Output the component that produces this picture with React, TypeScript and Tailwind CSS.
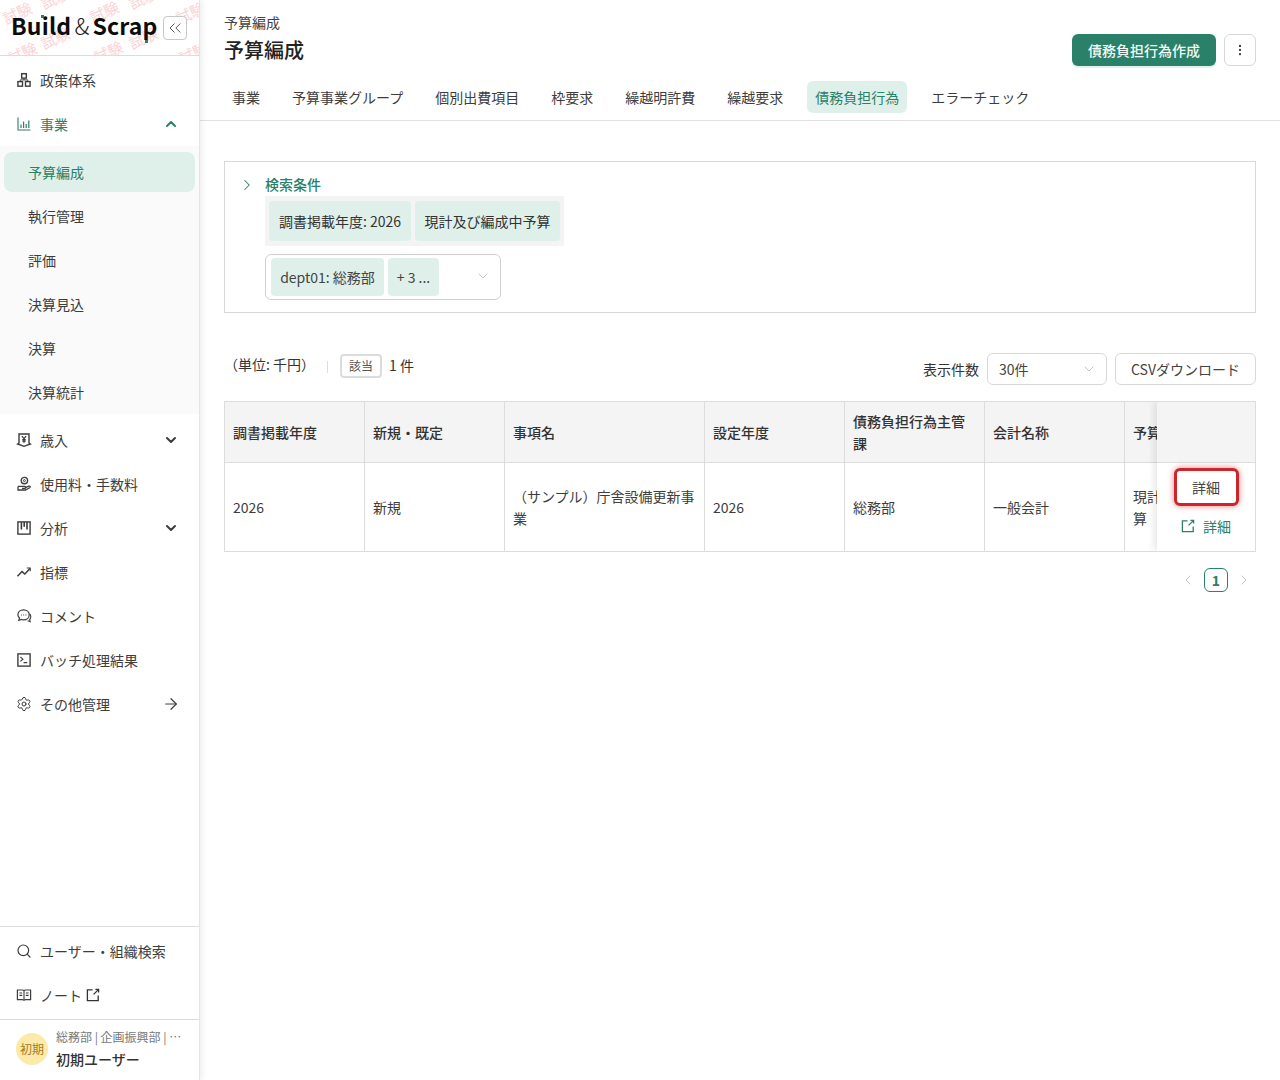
import React from "react";
import { ChevronUp, ChevronDown, ChevronRight, ChevronLeft, ChevronsLeft, ArrowRight, Search, Settings, MoreVertical } from "lucide-react";

const Ic = ({ children, className = "" }: { children: React.ReactNode; className?: string }) => (
  <svg viewBox="0 0 16 16" width="16" height="16" fill="none" stroke="currentColor" strokeWidth="1.4" className={className}>{children}</svg>
);

const OrgIcon = () => (
  <Ic><rect x="5.7" y="1.7" width="4.6" height="4.4" /><rect x="1.9" y="9.6" width="4.6" height="4.6" /><rect x="9.5" y="9.6" width="4.6" height="4.6" /><path d="M8 6.2v1.6M4.2 9.5V7.9h7.6v1.6" strokeWidth="1" /></Ic>
);
const ChartIcon = () => (
  <Ic><path d="M2 1.5V14h12.5" strokeWidth="1.1" /><path d="M5 12V8.5M7.6 12V5.5M10.2 12V8M12.8 12V4.5" strokeWidth="1.2" /></Ic>
);
const YenIcon = () => (
  <Ic><path d="M3 2h10v9.2l1.3.8L8 14.3 1.7 12l1.3-.8z" /><path d="M6 4.2 8 6.8l2-2.6M8 6.8v4M6.3 7.6h3.4M6.3 9.2h3.4" strokeWidth="1.3" /></Ic>
);
const FeeIcon = () => (
  <Ic><circle cx="8.4" cy="4.6" r="3.2" /><circle cx="8.4" cy="4.6" r="1" strokeWidth="1" /><path d="M2 10.4h6.4c1.8 0 1.8 2 0 2H6" strokeWidth="1.3" /><path d="M9.6 11.4l3.4-1.3c1.2-.3 1.7 1 .7 1.6L9.4 14H2v-3.6" strokeWidth="1.3" /></Ic>
);
const KanbanIcon = () => (
  <Ic><rect x="1.9" y="1.9" width="12.2" height="12.2" /><path d="M5.4 2v7.4M8.2 2v4.8M11 2v7.4" strokeWidth="1.6" /></Ic>
);
const TrendIcon = () => (
  <Ic><path d="M1.5 12.2 6 7.6l2.8 2.4L14 4.4" strokeWidth="1.5" /><path d="M10.8 4h3.4v3.2" strokeWidth="1.1" /></Ic>
);
const CommentIcon = () => (
  <Ic><path d="M7.6 1.9c3.2 0 5.6 2.1 5.6 5s-2.4 5-5.6 5c-.7 0-1.5-.1-2.1-.4l-2.7.8.7-2.3c-1-.9-1.6-2.1-1.6-3.1 0-3 2.5-5 5.7-5z" strokeWidth="1.2" /><path d="M13.4 5.8c1 .8 1.4 1.9 1.4 3 0 1-.4 2-1.1 2.7l.5 2.1-2.5-.8" strokeWidth="1.1" /><path d="M5 7h.9M7.2 7h.9M9.4 7h.9" strokeWidth="1.2" /></Ic>
);
const TerminalIcon = () => (
  <Ic><rect x="1.9" y="1.9" width="12.2" height="12.2" /><path d="m4.4 5 2.5 2.2-2.5 2.2M7.6 10.6h3.6" strokeWidth="1.1" /></Ic>
);
const BookIcon = () => (
  <Ic><path d="M1.4 3h5c.8 0 1.6.4 1.6 1 0-.6.8-1 1.6-1h5v9.6H9.8c-.8 0-1.8.3-1.8 1 0-.7-1-1-1.8-1H1.4z" strokeWidth="1.2" /><path d="M8 4v9.5M3.4 6h2.8M3.4 8.4h2.8M9.8 6h2.8M9.8 8.4h2.8" strokeWidth="1.1" /></Ic>
);
const ExtIcon = ({ size = 14 }: { size?: number }) => (
  <svg viewBox="0 0 14 14" width={size} height={size} fill="none" stroke="currentColor" strokeWidth="1.3">
    <path d="M6.5 1.8H1.4v10.8h10.8V7.6" /><path d="M7.6 6.4 12.4 1.6M9.4 1.4h3.2v3.2" />
  </svg>
);

const Item = ({ icon, label, right, active }: { icon: React.ReactNode; label: React.ReactNode; right?: React.ReactNode; active?: boolean }) => (
  <div className={`h-11 flex items-center pl-4 pr-5 text-sm ${active ? "text-[#2a8068]" : "text-[#3d3d3d]"}`}>
    <span className="w-6 flex items-center shrink-0">{icon}</span>
    <span className="flex-1 flex items-center pb-px">{label}</span>
    {right}
  </div>
);

const Sub = ({ label, active }: { label: string; active?: boolean }) => (
  <div className={`h-10 mb-1 mx-1 rounded-lg flex items-center pl-6 pb-px text-sm ${active ? "bg-[#dff0eb] text-[#2a8068]" : "text-[#3d3d3d]"}`}>{label}</div>
);

const marks: [number, number][] = [
  [40, -10], [128, -10], [2, 5], [89, 4], [175, 5],
  [40, 30], [128, 30], [7, 45], [93, 44], [178, 45],
];

const tabs = ["事業", "予算事業グループ", "個別出費項目", "枠要求", "繰越明許費", "繰越要求", "債務負担行為", "エラーチェック"];

const Th = ({ children, w }: { children?: React.ReactNode; w: string }) => (
  <th className={`${w} border-r border-[#dcdcdc] px-2 text-left align-middle font-medium text-sm leading-[22px] text-[#333]`}>{children}</th>
);
const Td = ({ children }: { children?: React.ReactNode }) => (
  <td className="border-r border-[#dcdcdc] px-2 text-sm leading-[22px] text-[#3d3d3d] align-middle">{children}</td>
);

export default function App() {
  return (
    <div className="flex w-[1280px] h-[1080px] overflow-hidden bg-white font-['Noto_Sans_CJK_JP','Noto_Sans',sans-serif] text-[#333]">
      <aside className="w-[200px] shrink-0 h-full flex flex-col border-r border-[#e4e4e4] shadow-[2px_0_6px_rgba(0,0,0,0.07)] z-10 bg-white">
        <div className="relative h-[56px] shrink-0 border-b border-[#dcdcdc] overflow-hidden flex items-center pl-3 pr-3">
          {marks.map(([x, y], i) => (
            <span key={i} className="absolute text-[15px] leading-none text-[#fad3d6] -rotate-[25deg] whitespace-nowrap" style={{ left: x, top: y }}>試験</span>
          ))}
          <div className="relative flex-1 min-w-0 flex items-center text-[23px] leading-none font-bold text-[#0c0c0c] tracking-[0.2px] -mt-1 -ml-[1px] whitespace-nowrap">
            Build<span className="font-light mx-[3px] text-[#222]">&amp;</span>Scrap
            <span className="absolute left-[30px] top-[1px] w-[3px] h-[3px] bg-[#2a8068]" />
            <span className="absolute left-[134px] top-[26px] w-[3px] h-[3px] bg-[#2a8068]" />
          </div>
          <button className="relative shrink-0 w-6 h-6 border border-[#c8c8c8] rounded flex items-center justify-center bg-white/80 text-[#444]">
            <ChevronsLeft size={20} strokeWidth={1.1} />
          </button>
        </div>
        <nav className="flex-1 pt-[2px]">
          <Item icon={<OrgIcon />} label="政策体系" />
          <Item active icon={<ChartIcon />} label="事業" right={<ChevronUp size={16} strokeWidth={3} />} />
          <div className="bg-[#fafafa] h-[268px] pt-[6px]">
            <Sub active label="予算編成" />
            <Sub label="執行管理" />
            <Sub label="評価" />
            <Sub label="決算見込" />
            <Sub label="決算" />
            <Sub label="決算統計" />
          </div>
          <div className="h-1" />
          <Item icon={<YenIcon />} label="歳入" right={<ChevronDown size={16} strokeWidth={3} />} />
          <Item icon={<FeeIcon />} label="使用料・手数料" />
          <Item icon={<KanbanIcon />} label="分析" right={<ChevronDown size={16} strokeWidth={3} />} />
          <Item icon={<TrendIcon />} label="指標" />
          <Item icon={<CommentIcon />} label="コメント" />
          <Item icon={<TerminalIcon />} label="バッチ処理結果" />
          <Item icon={<Settings size={16} strokeWidth={1.5} />} label="その他管理" right={<ArrowRight size={18} strokeWidth={1.6} className="-mr-px" />} />
        </nav>
        <div className="border-t border-[#dcdcdc] h-[93px] shrink-0 pt-[2px]">
          <Item icon={<Search size={16} strokeWidth={1.8} />} label="ユーザー・組織検索" />
          <Item icon={<BookIcon />} label={<>ノート<span className="ml-1 text-[#333]"><ExtIcon /></span></>} />
        </div>
        <div className="border-t border-[#dcdcdc] h-[61px] shrink-0 flex items-center pl-4 gap-2 pb-[2px]">
          <div className="w-8 h-8 rounded-full bg-[#fbeaa9] text-[#a57a26] text-xs flex items-center justify-center shrink-0">初期</div>
          <div className="min-w-0">
            <div className="text-xs leading-5 text-[#777] whitespace-nowrap">総務部 | 企画振興部 | ⋯</div>
            <div className="text-sm leading-6 font-medium text-[#333]">初期ユーザー</div>
          </div>
        </div>
      </aside>

      <main className="flex-1 min-w-0 flex flex-col">
        <header className="h-[121px] shrink-0 border-b border-[#e2e2e2] px-6 relative">
          <div className="pt-[12px] text-sm leading-5 text-[#444]">予算編成</div>
          <div className="flex items-start justify-between">
            <h1 className="mt-[4px] text-xl leading-7 font-medium text-[#222]">予算編成</h1>
            <div className="flex items-center gap-2 mt-[2px]">
              <button className="h-8 w-[144px] rounded-md bg-[#2a8068] text-[#f2faf7] text-sm font-medium shadow-[0_2px_0_#e0f2ec]">債務負担行為作成</button>
              <button className="w-8 h-8 rounded-md border border-[#d8d8d8] flex items-center justify-center text-[#444]"><MoreVertical size={14} /></button>
            </div>
          </div>
          <div className="absolute left-6 top-[81px] flex gap-4 text-sm">
            {tabs.map((t) => (
              <div key={t} className={`h-8 px-2 pb-px rounded-md flex items-center ${t === "債務負担行為" ? "bg-[#dff0eb] text-[#2a8068]" : "text-[#3d3d3d]"}`}>{t}</div>
            ))}
          </div>
        </header>

        <div className="px-6 pt-10">
          <section className="h-[152px] border border-[#d8d8d8] pl-[40px] pt-[12px] relative">
            <div className="flex items-center h-5 text-sm font-medium text-[#2a8068]">
              <ChevronRight size={18} strokeWidth={1.4} className="absolute left-[13px] top-[14px]" />
              検索条件
            </div>
            <div className="mt-[2px] w-[299px] h-[50px] bg-[#f4f4f4] flex items-center gap-1 px-1 text-sm text-[#333]">
              <span className="h-10 w-[142px] rounded bg-[#dff0eb] flex items-center justify-center whitespace-nowrap">調書掲載年度: 2026</span>
              <span className="h-10 w-[145px] rounded bg-[#dff0eb] flex items-center justify-center whitespace-nowrap">現計及び編成中予算</span>
            </div>
            <div className="mt-2 w-[236px] h-[46px] rounded-md border border-[#d0d0d0] flex items-center gap-1 px-[5px] text-sm text-[#444] relative">
              <span className="h-[38px] w-[113px] rounded bg-[#dff0eb] flex items-center justify-center whitespace-nowrap">dept01: 総務部</span>
              <span className="h-[38px] w-[51px] rounded bg-[#dff0eb] flex items-center justify-center">+ 3 ...</span>
              <ChevronDown size={16} strokeWidth={1} className="absolute right-[9px] top-[13px] text-[#aaa]" />
            </div>
          </section>

          <div className="mt-10 h-8 flex items-center text-sm text-[#333]">
            <span className="-mt-[10px] whitespace-nowrap">（単位: 千円）</span>
            <span className="-mt-1 ml-[12px] w-px h-3 bg-[#ddd]" />
            <span className="-mt-[6px] ml-3 w-[42px] h-[24px] rounded border-2 border-[#dcdcdc] text-xs flex items-center justify-center text-[#555]">該当</span>
            <span className="-mt-[9px] ml-[7px]">1 件</span>
            <span className="flex-1" />
            <span className="mr-2">表示件数</span>
            <div className="w-[120px] h-8 rounded-md border border-[#d8d8d8] flex items-center justify-between pl-[11px] pr-[9px] text-[#444]">
              30件<ChevronDown size={16} strokeWidth={1} className="text-[#aaa]" />
            </div>
            <button className="ml-2 w-[141px] h-8 rounded-md border border-[#d8d8d8] text-[#444]">CSVダウンロード</button>
          </div>

          <div className="mt-4 relative h-[151px] border border-[#dcdcdc] overflow-hidden">
            <table className="table-fixed border-separate border-spacing-0 w-[1040px] max-w-none">
              <thead>
                <tr className="h-[60px] bg-[#f4f4f4]">
                  <Th w="w-[140px]">調書掲載年度</Th>
                  <Th w="w-[140px]">新規・既定</Th>
                  <Th w="w-[200px]">事項名</Th>
                  <Th w="w-[140px]">設定年度</Th>
                  <Th w="w-[140px]">債務負担行為主管課</Th>
                  <Th w="w-[140px]">会計名称</Th>
                  <Th w="w-[140px]">予算区分</Th>
                </tr>
              </thead>
              <tbody>
                <tr className="h-[90px]">
                  <Td>2026</Td>
                  <Td>新規</Td>
                  <Td>（サンプル）庁舎設備更新事業</Td>
                  <Td>2026</Td>
                  <Td>総務部</Td>
                  <Td>一般会計</Td>
                  <Td>現計及び編成中予算</Td>
                </tr>
              </tbody>
            </table>
            <div className="absolute left-0 right-0 top-[60px] h-px bg-[#dcdcdc]" />
            <div className="absolute right-0 top-0 bottom-0 w-[98px] bg-white shadow-[-4px_0_6px_rgba(0,0,0,0.08)] flex flex-col">
              <div className="h-[60px] bg-[#f4f4f4] shrink-0" />
              <div className="h-px bg-[#dcdcdc] shrink-0" />
              <div className="flex-1 flex flex-col items-center pt-[5px]">
                <button className="w-[65px] h-[38px] rounded-md border-[3px] border-[#cc252b] bg-white text-sm text-[#444] shadow-[0_0_6px_rgba(208,43,48,0.6)]">詳細</button>
                <div className="mt-[10px] flex items-center gap-2 text-sm text-[#2a8068]">
                  <ExtIcon />詳細
                </div>
              </div>
            </div>
          </div>

          <div className="mt-4 flex items-center justify-end text-[#bbb]">
            <ChevronLeft size={16} strokeWidth={1.3} />
            <span className="mx-2 w-6 h-6 rounded-md border border-[#2a8068] text-[#2a8068] font-bold text-sm flex items-center justify-center">1</span>
            <ChevronRight size={16} strokeWidth={1.3} className="mr-1" />
          </div>
        </div>
      </main>
    </div>
  );
}
